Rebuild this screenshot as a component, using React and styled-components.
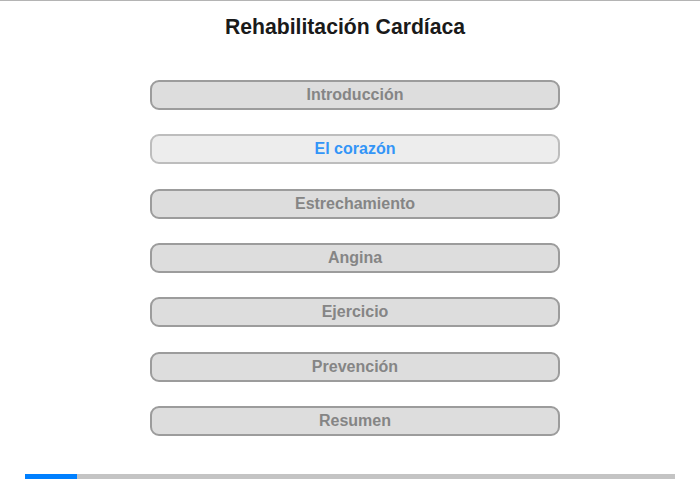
import React from 'react'
import styled, { createGlobalStyle } from 'styled-components'

const GlobalStyle = createGlobalStyle`
  html, body {
    margin: 0;
    padding: 0;
    background: #ffffff;
  }
  body {
    font-family: "Liberation Sans", Arial, sans-serif;
  }
`

const Page = styled.div`
  width: 700px;
  height: 480px;
  box-sizing: border-box;
  border-top: 1px solid #b4b4b4;
  display: flex;
  flex-direction: column;
  align-items: center;
  overflow: hidden;
`

const Title = styled.h1`
  margin: 1px 10px 0 0;
  height: 50px;
  display: flex;
  align-items: center;
  justify-content: center;
  font-size: 21.2px;
  font-weight: bold;
  color: #1a1a1a;
`

const Menu = styled.nav`
  margin: 28px 0 0 10px;
  display: flex;
  flex-direction: column;
  gap: 24.33px;
`

const Item = styled.div`
  width: 410px;
  height: 30px;
  box-sizing: border-box;
  border: 2px solid ${p => (p.$active ? '#bdbdbd' : '#9c9c9c')};
  border-radius: 9px;
  background: ${p => (p.$active ? '#ededed' : '#dddddd')};
  color: ${p => (p.$active ? '#3395f7' : '#858585')};
  display: flex;
  align-items: center;
  justify-content: center;
  font-size: 16px;
  font-weight: bold;
  cursor: pointer;
`

const Progress = styled.div`
  margin-top: auto;
  margin-bottom: 1px;
  width: 650px;
  height: 5px;
  background: #c4c4c4;
  display: flex;
`

const Fill = styled.div`
  height: 100%;
  background: #0080ff;
`

const chapters = [
  'Introducción',
  'El corazón',
  'Estrechamiento',
  'Angina',
  'Ejercicio',
  'Prevención',
  'Resumen',
]

export default function App() {
  const current = 1
  return (
    <>
      <GlobalStyle />
      <Page>
        <Title>Rehabilitación Cardíaca</Title>
        <Menu>
          {chapters.map((c, i) => (
            <Item key={c} $active={i === current}>{c}</Item>
          ))}
        </Menu>
        <Progress>
          <Fill style={{ width: '52px' }} />
        </Progress>
      </Page>
    </>
  )
}
